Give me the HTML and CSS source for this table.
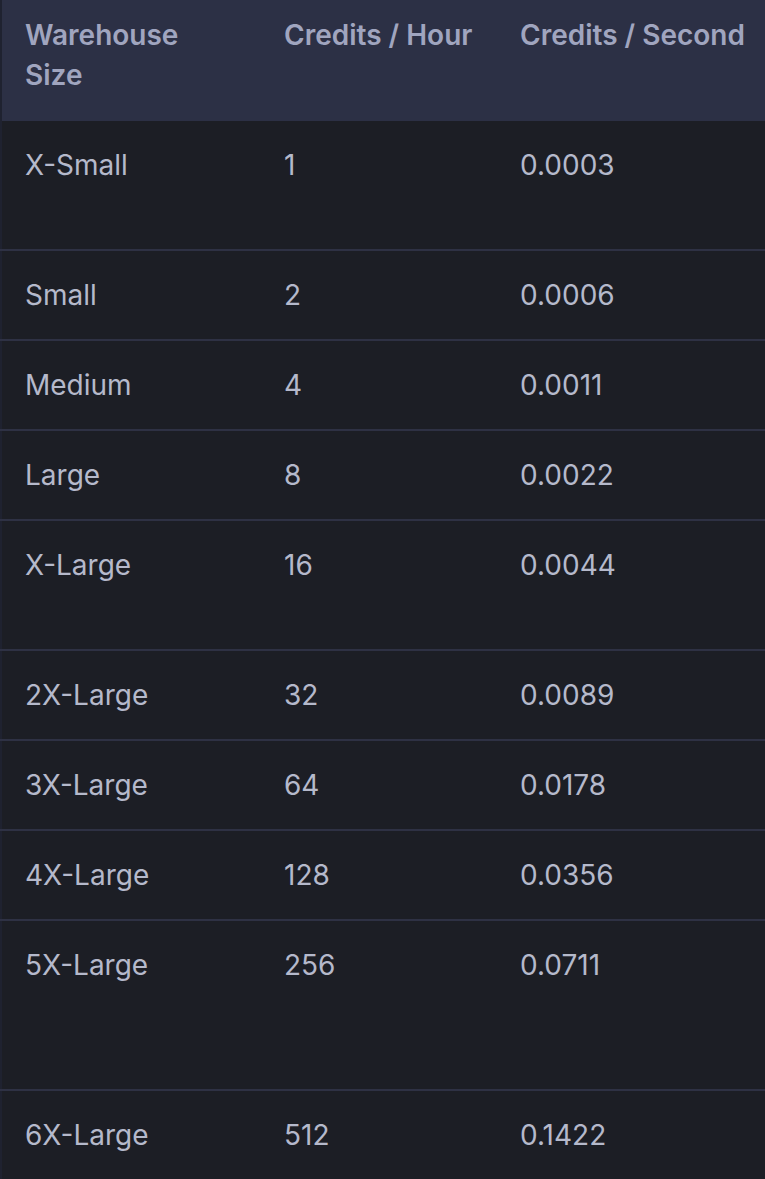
FILE: index.html
```html
<!DOCTYPE html>
<html lang="en">
<head>
<meta charset="utf-8">
<title>Warehouse credits</title>
<link rel="stylesheet" href="styles.css">
</head>
<body>
<table class="credits">
  <colgroup>
    <col class="c1">
    <col class="c2">
    <col class="c3">
  </colgroup>
  <thead>
    <tr>
      <th>Warehouse<br>Size</th>
      <th>Credits / Hour</th>
      <th>Credits / Second</th>
    </tr>
  </thead>
  <tbody>
    <tr class="first extra1"><td>X-Small</td><td>1</td><td>0.0003</td></tr>
    <tr><td>Small</td><td>2</td><td>0.0006</td></tr>
    <tr><td>Medium</td><td>4</td><td>0.0011</td></tr>
    <tr><td>Large</td><td>8</td><td>0.0022</td></tr>
    <tr class="extra1"><td>X-Large</td><td>16</td><td>0.0044</td></tr>
    <tr><td>2X-Large</td><td>32</td><td>0.0089</td></tr>
    <tr><td>3X-Large</td><td>64</td><td>0.0178</td></tr>
    <tr><td>4X-Large</td><td>128</td><td>0.0356</td></tr>
    <tr class="extra2"><td>5X-Large</td><td>256</td><td>0.0711</td></tr>
    <tr><td>6X-Large</td><td>512</td><td>0.1422</td></tr>
  </tbody>
</table>
</body>
</html>
```
FILE: styles.css
```css
html, body {
  margin: 0;
  padding: 0;
  background: #1c1e25;
}
body {
  width: 765px;
  height: 1179px;
  overflow: hidden;
}
.credits {
  border-collapse: collapse;
  table-layout: fixed;
  width: 790px;
  font-family: Inter, "Noto Sans", sans-serif;
  font-size: 28px;
  line-height: 40px;
  border-left: 2px solid #1f2230;
}
.c1 { width: 259px; }
.c2 { width: 236px; }
.c3 { width: 295px; }
.credits th {
  background: #2c3045;
  color: #a0a5bf;
  font-weight: 600;
  text-align: left;
  vertical-align: top;
  padding: 15px 24px 26px 24px;
  white-space: nowrap;
}
.credits th:first-child { padding-left: 23px; }
.credits td {
  color: #b5b9cb;
  text-align: left;
  vertical-align: top;
  padding: 24px 24px 24px 24px;
  border-top: 2px solid #2e3144;
  white-space: nowrap;
}
.credits td:first-child { padding-left: 23px; }
.credits tr.first td { border-top: 0; }
.credits tr.extra1 td { padding-bottom: 64px; }
.credits tr.extra2 td { padding-bottom: 104px; }
```
